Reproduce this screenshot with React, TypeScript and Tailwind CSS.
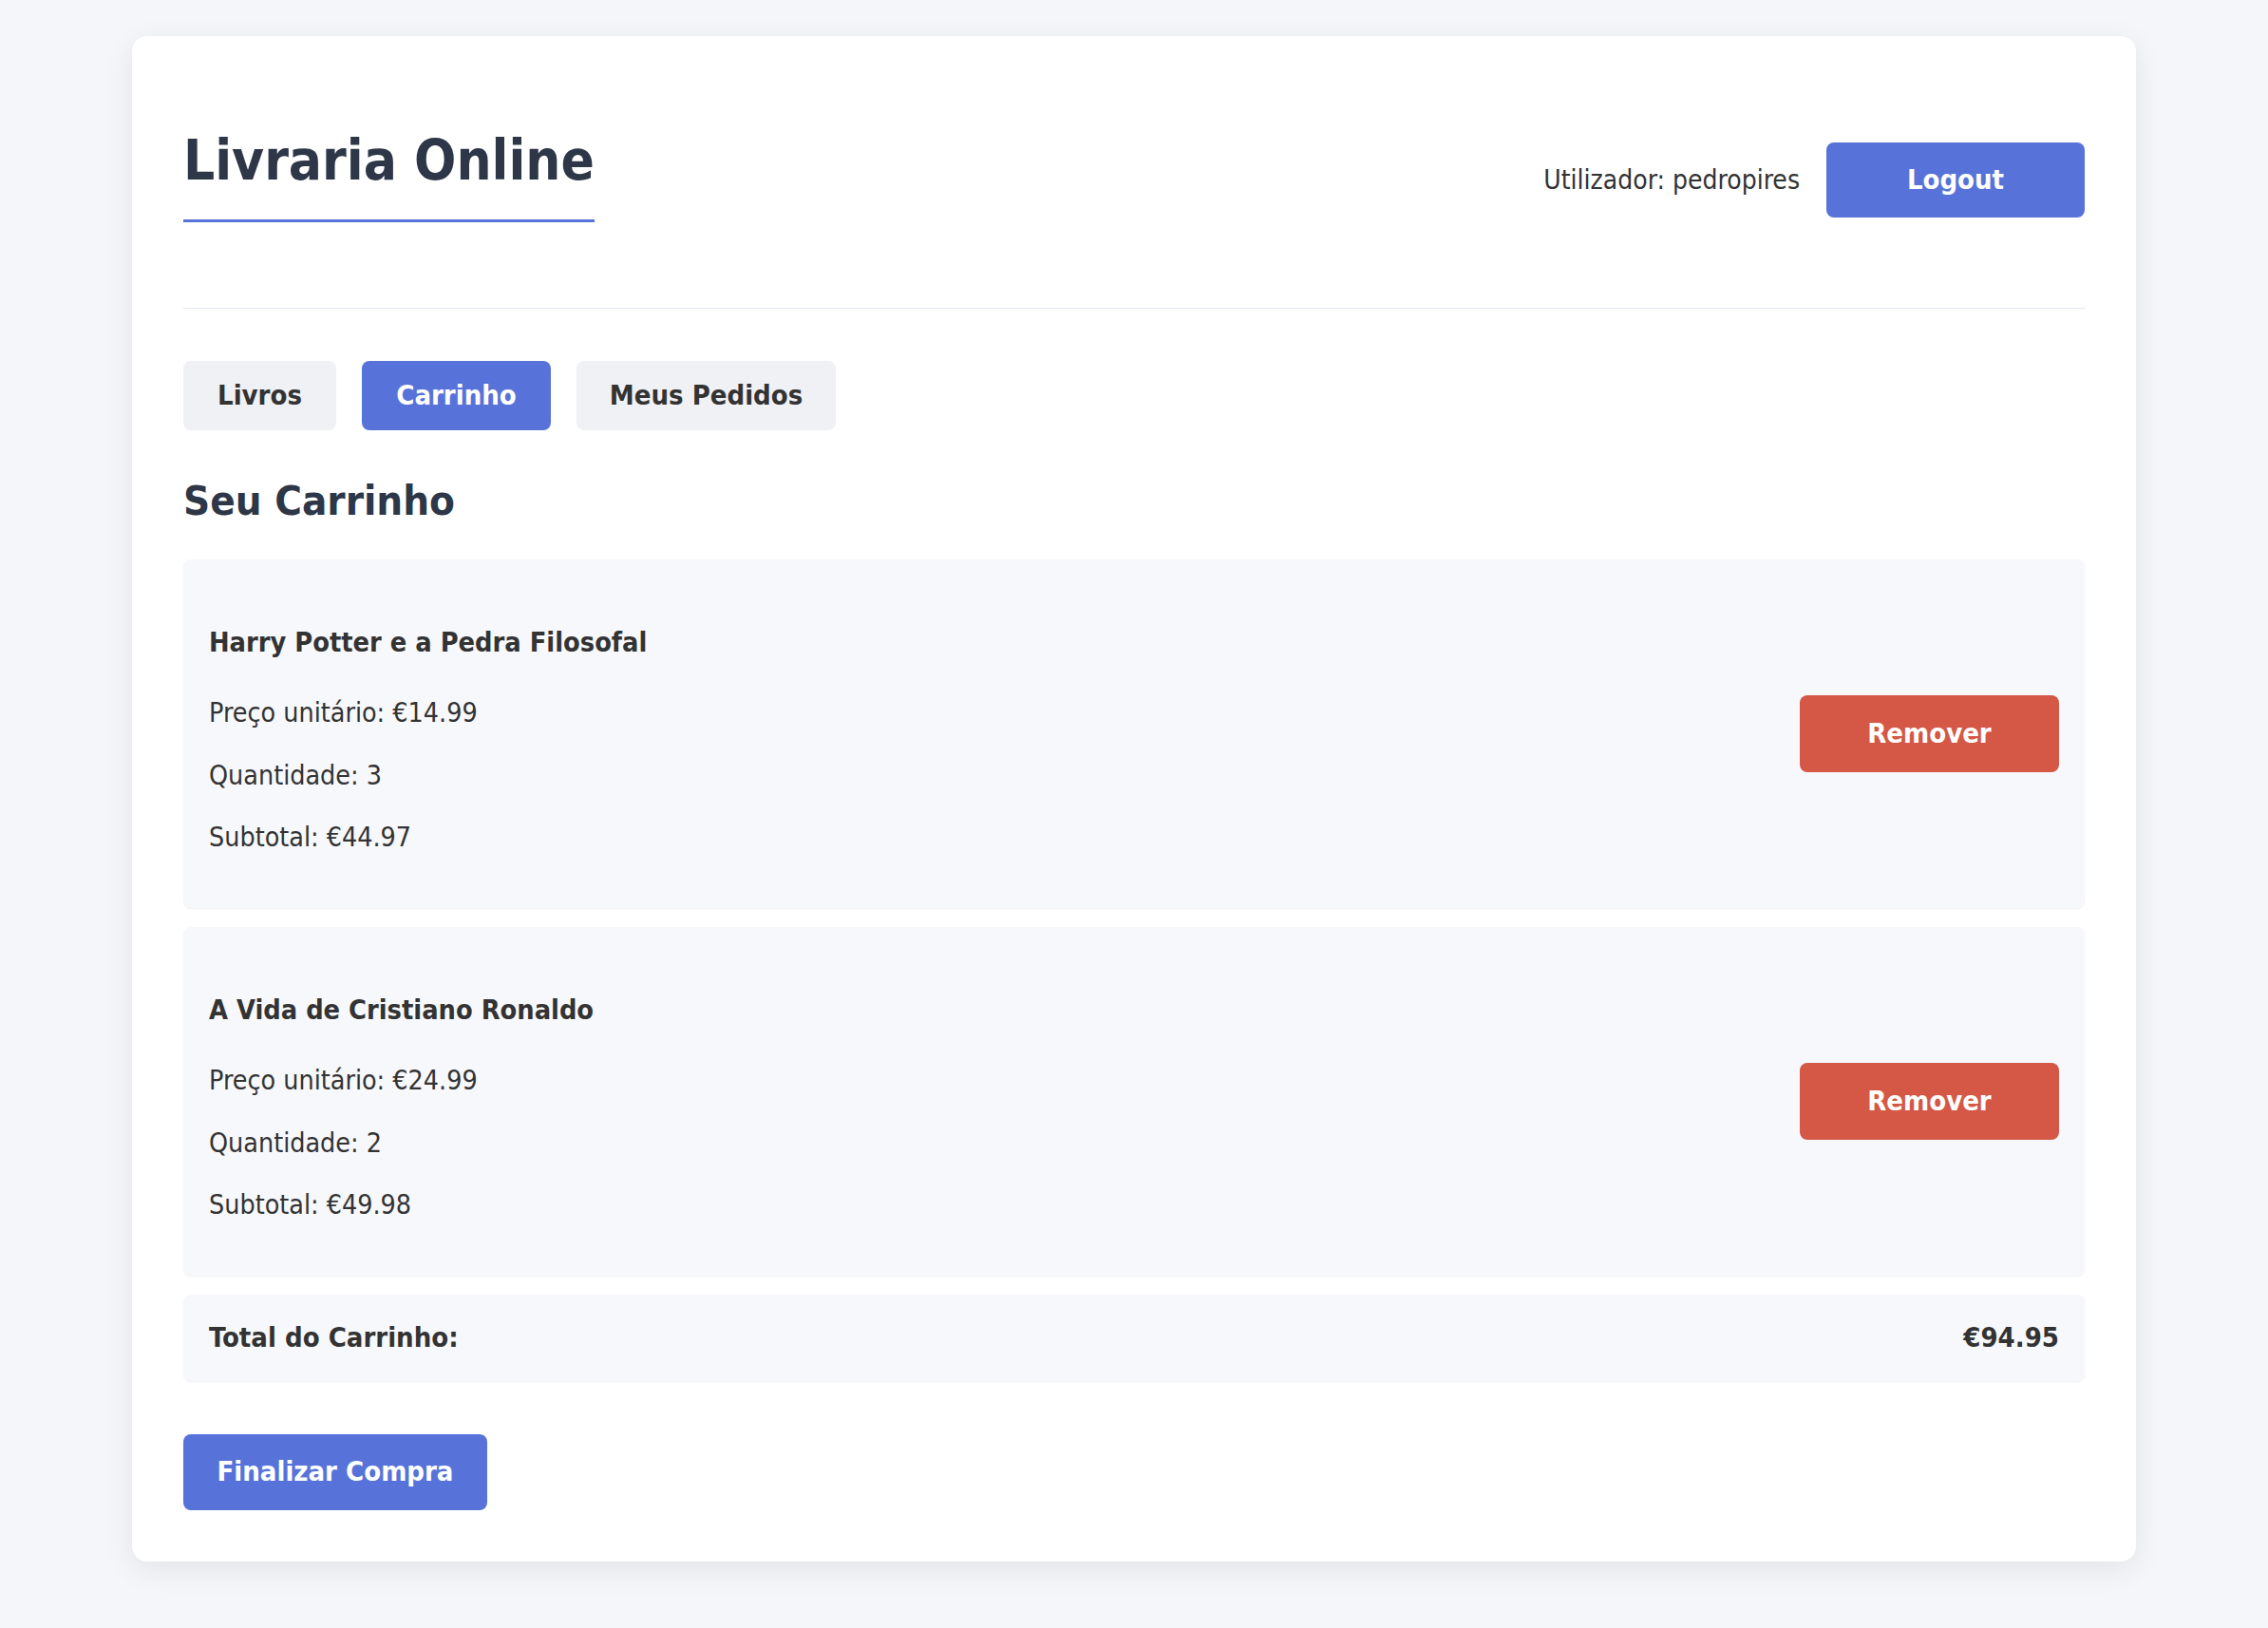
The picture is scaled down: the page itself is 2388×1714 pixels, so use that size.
import React from "react";

const items = [
  { title: "Harry Potter e a Pedra Filosofal", price: "€14.99", qty: 3, subtotal: "€44.97" },
  { title: "A Vida de Cristiano Ronaldo", price: "€24.99", qty: 2, subtotal: "€49.98" },
];

export default function App() {
  return (
    <div className="min-h-screen bg-[#f5f6fa] pt-[38px] pb-[71px] font-['DejaVu_Sans_Condensed','DejaVu_Sans',sans-serif] font-stretch-condensed text-[#333333]">
      <div className="mx-auto w-[2110px] rounded-[16px] bg-white p-[54px] shadow-[0_8px_32px_rgba(0,0,0,0.08)]">
        <header className="flex items-start justify-between border-b border-[#e3e7ee] pb-[49px]">
          <h1 className="my-[41px] border-b-[3px] border-[#5773d9] pb-[26px] text-[58px] font-bold leading-[72px] text-[#2d3748]">
            Livraria Online
          </h1>
          <div className="mt-[58px] flex items-center gap-[28px]">
            <span className="text-[28px] leading-[33px]">Utilizador: pedropires</span>
            <button className="h-[79px] w-[272px] rounded-[8px] bg-[#5773d9] text-[29px] font-bold text-white">
              Logout
            </button>
          </div>
        </header>

        <nav className="mt-[55px] flex gap-[27px]">
          <button className="h-[73px] w-[161px] rounded-[8px] bg-[#f0f1f5] text-[29px] font-bold text-[#333333]">
            Livros
          </button>
          <button className="h-[73px] w-[199px] rounded-[8px] bg-[#5773d9] text-[29px] font-bold text-white">
            Carrinho
          </button>
          <button className="h-[73px] w-[273px] rounded-[8px] bg-[#f0f1f5] text-[29px] font-bold text-[#333333]">
            Meus Pedidos
          </button>
        </nav>

        <h2 className="mt-[48px] text-[43.5px] font-bold leading-[52px] text-[#2d3748]">Seu Carrinho</h2>

        <div className="mt-[36px] flex flex-col gap-[20px]">
          {items.map((it) => (
            <div
              key={it.title}
              className="flex items-center justify-between rounded-[8px] bg-[#f7f8fc] px-[27px] shadow-[0_1px_2px_rgba(0,0,0,0.06)]"
            >
              <div className="flex flex-col pt-[70px] pb-[58px]">
                <h3 className="text-[28.7px] font-bold leading-[34px]">{it.title}</h3>
                <p className="mt-[41px] text-[28.4px] leading-[33px]">Preço unitário: {it.price}</p>
                <p className="mt-[32.5px] text-[28.4px] leading-[33px]">Quantidade: {it.qty}</p>
                <p className="mt-[32.5px] text-[28.4px] leading-[33px]">Subtotal: {it.subtotal}</p>
              </div>
              <button className="h-[81px] w-[273px] rounded-[8px] bg-[#d55745] text-[29px] font-bold text-white">
                Remover
              </button>
            </div>
          ))}

          <div className="flex h-[91px] items-center justify-between rounded-[8px] bg-[#f7f8fc] px-[27px] shadow-[0_1px_2px_rgba(0,0,0,0.06)]">
            <span className="text-[29px] font-bold">Total do Carrinho:</span>
            <span className="text-[29px] font-bold">€94.95</span>
          </div>
        </div>

        <button className="mt-[56px] h-[80px] w-[320px] rounded-[8px] bg-[#5773d9] text-[29px] font-bold text-white">
          Finalizar Compra
        </button>
      </div>
    </div>
  );
}
